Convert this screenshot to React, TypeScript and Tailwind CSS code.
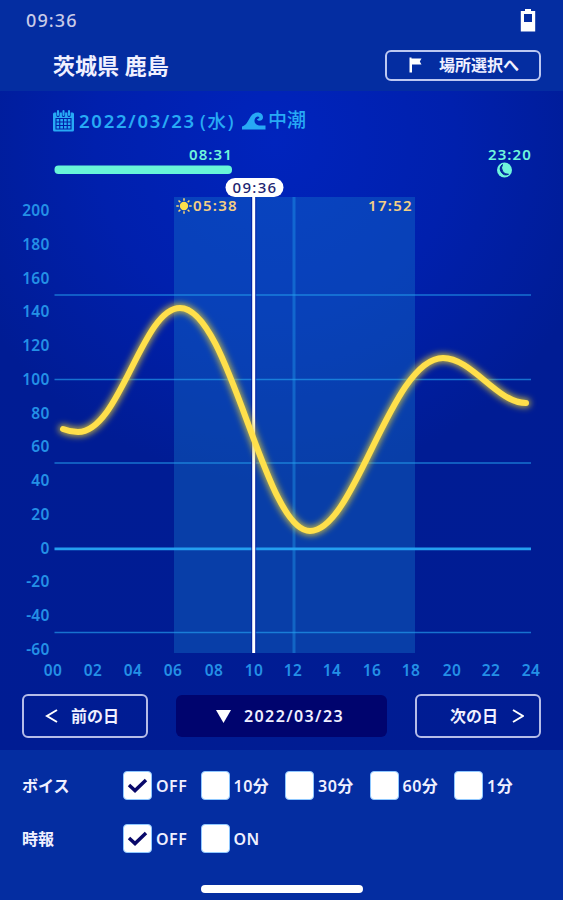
import { useState } from 'react';

const yLabels = [200, 180, 160, 140, 120, 100, 80, 60, 40, 20, 0, -20, -40, -60];
const hours = [
  { label: '00', x: 53 },
  { label: '02', x: 93 },
  { label: '04', x: 133 },
  { label: '06', x: 173 },
  { label: '08', x: 214 },
  { label: '10', x: 254 },
  { label: '12', x: 293 },
  { label: '14', x: 332 },
  { label: '16', x: 372 },
  { label: '18', x: 411 },
  { label: '20', x: 452 },
  { label: '22', x: 491 },
  { label: '24', x: 531 },
];

const sunRays = [0, 45, 90, 135, 180, 225, 270, 315];

function BatteryIcon() {
  return (
    <svg width="16" height="23" viewBox="0 0 16 23">
      <path d="M5 0h6v2h4.200v20.500H.8V2H5z M4 5v8h8V5z" fill="#fff" fillRule="evenodd" />
    </svg>
  );
}

function FlagIcon() {
  return (
    <svg width="14" height="16" viewBox="0 0 14 16">
      <path d="M.5 .5h2v1H12.500L10.800 4.500 12.500 7.500H3V15.500H.5z" fill="#fff" />
    </svg>
  );
}

function CalendarIcon() {
  return (
    <svg width="21" height="22" viewBox="0 0 21 22">
      <rect y="2.500" width="21" height="19" rx="1.500" fill="#27aaf5" />
      <path d="M3 8.500h15v10.500H3zM6.750 8.500v10.500M10.500 8.500v10.500M14.250 8.500v10.500M3 12h15M3 15.500h15" fill="none" stroke="#0320a8" strokeWidth="1.100" />
      <path d="M5 .5v5M10.500 .5v5M16 .5v5" stroke="#0320a8" strokeWidth="3.200" strokeLinecap="round" />
      <path d="M5 1v4M10.500 1v4M16 1v4" stroke="#27aaf5" strokeWidth="2" strokeLinecap="round" />
    </svg>
  );
}

function WaveIcon() {
  return (
    <svg width="24" height="18" viewBox="0 0 24 18">
      <path
        d="M0 17.500V14.500C4 13.500 5.500 10 7.500 6.500C9.500 2.500 12 .5 15.500 .5C19 .5 21 2.700 21 5.200C21 7.400 19.500 8.800 17.500 8.800C16 8.800 15 7.900 15 6.900C16.500 7.200 17.700 6.500 17.200 5.200C16.200 3.600 12.500 5.200 12.500 8.700C12.500 11.700 15 13.500 18.500 13.500H23.500V17.500Z"
        fill="#27aaf5"
      />
    </svg>
  );
}

function TideChart() {
  return (
    <svg width="563" height="545" viewBox="0 140 563 545" className="block font-medium">
      <defs>
        <filter id="glow" x="-10%" y="-10%" width="120%" height="120%">
          <feGaussianBlur stdDeviation="3" />
        </filter>
      </defs>

      {/* moon */}
      <g fill="#6ff5dc" fontSize="15" letterSpacing="1.1" className="font-semibold">
        <text x="189" y="160">08:31</text>
        <text x="488" y="160">23:20</text>
      </g>
      <rect x="54.500" y="165.500" width="177.500" height="8.500" rx="4" fill="#68f5d8" />
      <circle cx="504.500" cy="170" r="7.500" fill="#6ff5dc" />
      <path d="M502.500 164.500A5.800 5.800 0 0 0 508.500 174.300A6.500 6.500 0 0 1 502.500 164.500Z" fill="#001f98" stroke="#001f98" strokeWidth="1" />

      {/* daytime */}
      <rect x="174" y="197" width="241" height="456" fill="#1779cc" fillOpacity="0.37" />
      <g fill="#f3cf85">
        <circle cx="184" cy="206" r="4.200" fill="#ffe04b" />
        {sunRays.map((deg) => (
          <path key={deg} d="M184 200.800v-2.500" stroke="#ffd875" strokeWidth="1.500" transform={`rotate(${deg} 184 206)`} />
        ))}
        <g fontSize="15" letterSpacing="1.3" className="font-semibold">
          <text x="193" y="211">05:38</text>
          <text x="368" y="211">17:52</text>
        </g>
      </g>

      <g stroke="#249ff0">
        <path d="M294 197V653" strokeWidth="3" strokeOpacity="0.4" />
        <path d="M54.500 295H531M54.500 379.500H531M54.500 463H531M54.500 632.500H531" strokeWidth="1.700" strokeOpacity="0.65" />
        <path d="M54.500 548.800H531" strokeWidth="2.800" />
      </g>

      <path d="M253.700 195V653" stroke="#00129a" strokeWidth="5" strokeOpacity="0.7" />
      <path d="M253.700 195V653" stroke="#fff" strokeWidth="3" />
      <rect x="225.500" y="178" width="58" height="19" rx="9.500" fill="#fff" />
      <text x="255" y="192.800" textAnchor="middle" fontSize="15" letterSpacing="1.3" fill="#1c2470">09:36</text>

      <g fill="none" strokeLinecap="round">
        {['glow', ''].map((name) => (
          <path
            key={name}
            d="M63 429C68 431 73 432 78 432C120 432 142 308 180 308C230 308 264 531 310 531C355 531 391 358 443 358C472 358 497 403 526 403"
            stroke={name ? '#e8cf30' : '#ffe04b'}
            strokeOpacity={name ? 0.8 : 1}
            strokeWidth={name ? 9 : 6}
            filter={name ? 'url(#glow)' : undefined}
          />
        ))}
      </g>

      <g fill="#2490e6" fontSize="15.500" className="font-semibold">
        {yLabels.map((value, i) => (
          <text key={value} x="49.500" y={216.3 + i * 33.72} textAnchor="end" letterSpacing="0.2">{value}</text>
        ))}
        {hours.map((h) => (
          <text key={h.label} x={h.x} y="676.200" textAnchor="middle" letterSpacing="0.3">{h.label}</text>
        ))}
      </g>
    </svg>
  );
}

function CheckItem({ label, checked, onClick, width }: { label: string; checked: boolean; onClick: () => void; width: string }) {
  return (
    <button onClick={onClick} className={`flex items-center gap-1 text-left ${width}`}>
      <span className="flex size-[29px] shrink-0 items-center justify-center rounded-sm border border-[#8fc8ff] bg-white">
        {checked && (
          <svg width="21" height="17" viewBox="0 0 21 17">
            <path d="M2 8L8 13.500L19 3" fill="none" stroke="#09096a" strokeWidth="3.500" />
          </svg>
        )}
      </span>
      <span className="whitespace-nowrap text-base font-semibold tracking-[0.5px]">{label}</span>
    </button>
  );
}

export default function App() {
  const [voice, setVoice] = useState('OFF');
  const [signal, setSignal] = useState('OFF');

  return (
    <main className="flex h-[900px] w-[563px] flex-col overflow-hidden bg-[#042da1] font-['Noto_Sans','Noto_Sans_CJK_JP',sans-serif] text-[#f0f0ff]">
      <header className="h-[91px] shrink-0">
        <div className="flex h-10 items-center justify-between pl-[26px] pr-[27px]">
          <span className="text-lg font-medium tracking-[1.100px] text-[#c9cbe8]">09:36</span>
          <BatteryIcon />
        </div>
        <div className="flex h-[50px] items-center justify-between pl-[53px] pr-[22px]">
          <h1 className="text-[22px] font-bold">茨城県 鹿島</h1>
          <button className="flex h-[31px] w-[156px] items-center rounded-md border-2 border-[#bcc8f2] pl-[22px]">
            <FlagIcon />
            <span className="ml-4 whitespace-nowrap text-base font-bold">場所選択へ</span>
          </button>
        </div>
      </header>

      <section className="h-[659px] shrink-0 bg-[radial-gradient(circle_at_275px_50px,#0024bd_0px,#0020ad_180px,#001c94_340px,#001c93_100%)]">
        <div className="flex h-[49px] items-center pl-[53px] pt-[10px] text-[#27aaf5]">
          <CalendarIcon />
          <span className="ml-[5px] w-[117px] whitespace-nowrap text-[18.500px] font-semibold tracking-[1.750px]">2022/03/23</span>
          <span className="ml-1 w-[36px] whitespace-nowrap text-[18.500px] font-medium tracking-[1.700px]">(水)</span>
          <span className="ml-[6px] flex items-center">
            <WaveIcon />
            <span className="ml-[2px] text-[19px] font-medium">中潮</span>
          </span>
        </div>
        <TideChart />
        <div className="mt-[9px] flex items-center justify-between px-[22px]">
          <button className="flex h-11 w-[126px] items-center rounded-md border-2 border-[#b5bce8] pl-[21px]">
            <svg width="13" height="14" viewBox="0 0 13 14">
              <path d="M12 1L2 7L12 13" fill="none" stroke="#fff" strokeWidth="2" />
            </svg>
            <span className="ml-[13px] text-base font-bold">前の日</span>
          </button>
          <button className="flex h-[42px] w-[211px] items-center rounded-md bg-[#00046e] pl-10">
            <svg width="15" height="13" viewBox="0 0 15 13">
              <path d="M0 0H15L7.500 13Z" fill="#fff" />
            </svg>
            <span className="ml-[13px] text-base font-semibold tracking-[1.400px]">2022/03/23</span>
          </button>
          <button className="flex h-11 w-[126px] items-center justify-end rounded-md border-2 border-[#b5bce8] pr-[15px]">
            <span className="mr-[14px] text-base font-bold">次の日</span>
            <svg width="12" height="14" viewBox="0 0 12 14">
              <path d="M1 1L11 7L1 13" fill="none" stroke="#fff" strokeWidth="2" />
            </svg>
          </button>
        </div>
      </section>

      <footer className="flex grow flex-col items-center">
        <div className="flex w-full items-center pl-[22px] pt-[21px]">
          <span className="w-[101px] text-base font-bold">ボイス</span>
          {['OFF', '10分', '30分', '60分', '1分'].map((label) => (
            <CheckItem
              key={label}
              label={label}
              checked={voice === label}
              onClick={() => setVoice(label)}
              width={label === 'OFF' ? 'w-[77.500px]' : 'w-[84.500px]'}
            />
          ))}
        </div>
        <div className="flex w-full items-center pl-[22px] pt-6">
          <span className="w-[101px] text-base font-bold">時報</span>
          {['OFF', 'ON'].map((label) => (
            <CheckItem key={label} label={label} checked={signal === label} onClick={() => setSignal(label)} width="w-[77.500px]" />
          ))}
        </div>
        <div className="mt-8 h-2 w-[162px] rounded-full bg-white" />
      </footer>
    </main>
  );
}
